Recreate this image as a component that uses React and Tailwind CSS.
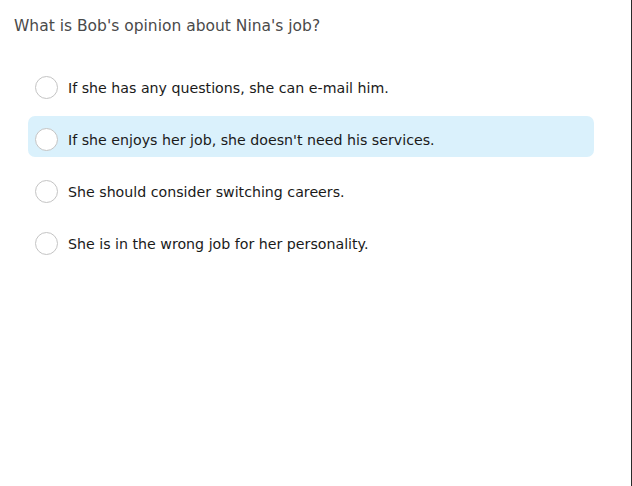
export default function App() {
  const options = [
    "If she has any questions, she can e-mail him.",
    "If she enjoys her job, she doesn't need his services.",
    "She should consider switching careers.",
    "She is in the wrong job for her personality.",
  ];
  return (
    <div className="w-[632px] h-[486px] bg-white border-r border-[#2a2a2a] overflow-hidden" style={{ fontFamily: '"DejaVu Sans", Verdana, sans-serif' }}>
      <div className="pl-[14px] pt-[16px] text-[15.5px] leading-[20px] text-[#4a4a4a]">What is Bob's opinion about Nina's job?</div>
      <div className="mt-[28px] ml-[28px] w-[566px] flex flex-col gap-[11px]">
        {options.map((o, i) => (
          <div key={i} className={`flex items-center h-[41px] rounded-[7px] pl-[7px] ${i === 1 ? "bg-[#daf1fc]" : ""}`}>
            <div className="w-[23px] h-[23px] rounded-full border border-[#c4c4c4] bg-white shrink-0 mt-[6px]" />
            <div className="ml-[10px] mt-[8px] text-[14.2px] text-[#1a1a1a]">{o}</div>
          </div>
        ))}
      </div>
    </div>
  );
}
